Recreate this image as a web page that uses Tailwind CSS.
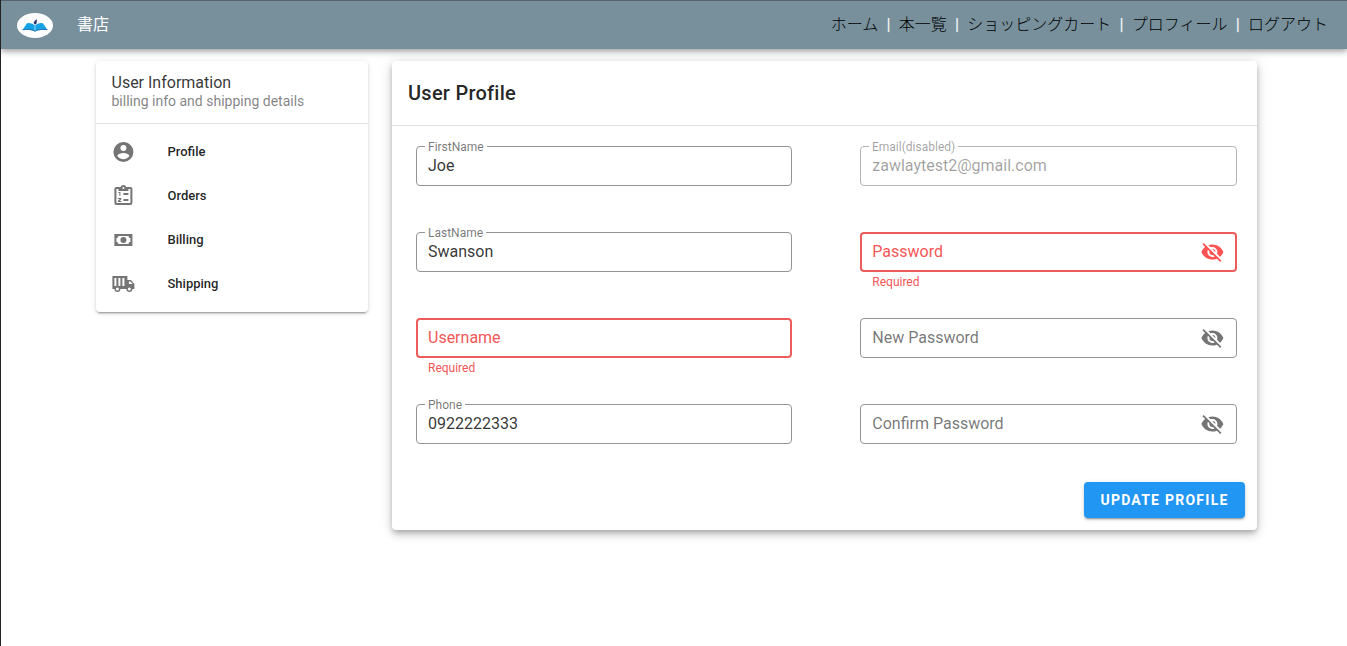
<!DOCTYPE html>
<html lang="ja">
<head>
<meta charset="utf-8">
<title>User Profile</title>
<script src="https://cdn.jsdelivr.net/npm/@tailwindcss/browser@4"></script>
</head>
<body class="bg-white font-['Roboto','Noto_Sans_CJK_JP',sans-serif] text-black/80">
<svg class="hidden">
  <symbol id="eye-off" viewBox="0 0 24 24"><path d="M11.83,9L15,12.16C15,12.11 15,12.05 15,12A3,3 0 0,0 12,9C11.94,9 11.89,9 11.83,9M7.53,9.8L9.08,11.35C9.03,11.56 9,11.77 9,12A3,3 0 0,0 12,15C12.22,15 12.44,14.97 12.65,14.92L14.2,16.45C13.53,16.78 12.79,17 12,17A5,5 0 0,1 7,12C7,11.21 7.2,10.47 7.53,9.8M2,4.27L4.28,6.55L4.73,7C3.08,8.3 1.78,10 1,12C2.73,16.39 7,19.5 12,19.5C13.55,19.5 15.03,19.2 16.38,18.66L16.81,19.08L19.73,22L21,20.73L3.27,3M12,7A5,5 0 0,1 17,12C17,12.64 16.87,13.26 16.64,13.82L19.57,16.75C21.07,15.5 22.27,13.86 23,12C21.27,7.61 17,4.5 12,4.5C10.6,4.5 9.26,4.75 8,5.2L10.17,7.35C10.74,7.13 11.35,7 12,7Z"/></symbol>
</svg>
<div class="h-[646px] overflow-hidden border-l border-[#222]">
  <header class="relative flex h-[49px] items-center border-t border-[#56656d] bg-[#78909c] pl-4 pr-[19px] shadow-[0_2px_4px_-1px_rgba(0,0,0,.2),0_4px_5px_0_rgba(0,0,0,.14),0_1px_10px_0_rgba(0,0,0,.12)]">
    <svg class="h-[25px] w-9" viewBox="0 0 36 25">
      <ellipse cx="18" cy="12.5" rx="18" ry="12.5" fill="#fff"/>
      <path d="M5.500 17 10 10.200Q15 9.300 18 12.500Q21 9.300 26 10.200L30.500 17Q22 16 18 18.500Q14 16 5.500 17Z" fill="#16a3e6"/>
      <path d="M5.500 16.700Q14 15.600 18 18.200Q22 15.600 30.500 16.700" fill="none" stroke="#2467a8" stroke-width=".8"/>
      <path d="M18 12.500V17.500" stroke="#d8f0fb" stroke-width=".7"/>
      <path d="M16.500 10Q17.500 7 20 6.200L19.500 10.500 18 11.800Z" fill="#29366f"/>
    </svg>
    <div class="ml-6 text-base leading-6 text-white">書店</div>
    <nav class="ml-auto flex items-center whitespace-pre text-base font-light leading-6 text-black">
      <a>ホーム</a><span class="w-[20.500px] text-center font-bold text-white/90">|</span><a>本一覧</a><span class="w-[20.500px] text-center font-bold text-white/90">|</span><a>ショッピングカート</a><span class="w-[20.500px] text-center font-bold text-white/90">|</span><a>プロフィール</a><span class="w-[20.500px] text-center font-bold text-white/90">|</span><a>ログアウト</a>
    </nav>
  </header>
  <main class="flex items-start gap-6 pl-[95px] pt-3">
    <aside class="h-[251px] w-[272px] rounded bg-white shadow-[0_3px_1px_-2px_rgba(0,0,0,.2),0_2px_2px_0_rgba(0,0,0,.14),0_1px_5px_0_rgba(0,0,0,.12)]">
      <div class="h-[63px] border-b border-black/12 pl-[15.500px] pt-3">
        <div class="text-base leading-[19px]">User Information</div>
        <div class="text-sm leading-[18px] text-black/50">billing info and shipping details</div>
      </div>
      <ul class="pt-[6px] text-[13px] font-medium text-black/87">
        <li class="flex h-11 items-center gap-[32.500px] pl-[15px]">
          <svg class="size-6 fill-[#757575]" viewBox="-0.4 0 24 24"><path d="M12,19.2C9.5,19.2 7.29,17.92 6,16C6.03,14 10,12.9 12,12.9C14,12.9 17.97,14 18,16C16.71,17.92 14.5,19.2 12,19.2M12,5A3,3 0 0,1 15,8A3,3 0 0,1 12,11A3,3 0 0,1 9,8A3,3 0 0,1 12,5M12,2A10,10 0 0,0 2,12A10,10 0 0,0 12,22A10,10 0 0,0 22,12C22,6.47 17.5,2 12,2Z"/></svg>
          <span>Profile</span>
        </li>
        <li class="flex h-11 items-center gap-[32.500px] pl-[15px]">
          <svg class="size-6 fill-[#757575]" viewBox="-0.4 0 24 24"><path fill-rule="evenodd" d="M19,3H14.82C14.4,1.840 13.300,1 12,1C10.700,1 9.600,1.840 9.180,3H5A2,2 0 0,0 3,5V19A2,2 0 0,0 5,21H19A2,2 0 0,0 21,19V5A2,2 0 0,0 19,3M12,3A1,1 0 0,1 12,5A1,1 0 0,1 12,3M7,7H17V5H19V19H5V5H7V7Z"/><path d="M12 9H17V11H12ZM12 15H17V17H12ZM7 8H9V12H8V9H7ZM6.500 14H10V15.300L8.300 17H10V18H6.500V16.700L8.500 15H6.500Z"/></svg>
          <span>Orders</span>
        </li>
        <li class="flex h-11 items-center gap-[32.500px] pl-[15px]">
          <svg class="size-6 fill-[#757575]" viewBox="-0.4 0 24 24"><path d="M3,6H21V18H3V6M12,9A3,3 0 0,1 15,12A3,3 0 0,1 12,15A3,3 0 0,1 9,12A3,3 0 0,1 12,9M7,8A2,2 0 0,1 5,10V14A2,2 0 0,1 7,16H17A2,2 0 0,1 19,14V10A2,2 0 0,1 17,8H7Z"/></svg>
          <span>Billing</span>
        </li>
        <li class="flex h-11 items-center gap-[32.500px] pl-[15px]">
          <svg class="size-6 fill-[#757575]" viewBox="-0.4 0 24 24"><path fill-rule="evenodd" d="M1 4H16V8H19.500L23 12V17H21A3 3 0 0 1 15 17H9A3 3 0 0 1 3 17H1ZM3 6V14H5V6ZM7 6V14H9V6ZM11 6V14H13V6ZM17.500 9.500V12H21.300L19 9.500ZM6 15.500A1.500 1.500 0 0 0 6 18.500A1.500 1.500 0 0 0 6 15.500ZM18 15.500A1.500 1.500 0 0 0 18 18.500A1.500 1.500 0 0 0 18 15.500Z"/></svg>
          <span>Shipping</span>
        </li>
      </ul>
    </aside>
    <section class="h-[469px] w-[865px] rounded bg-white shadow-[0_3px_5px_-1px_rgba(0,0,0,.2),0_5px_8px_0_rgba(0,0,0,.14),0_1px_14px_0_rgba(0,0,0,.12)]">
      <h1 class="flex h-[65px] items-center border-b border-black/12 pl-4 text-xl font-medium tracking-[0.25px] text-black/87">User Profile</h1>
      <form class="grid grid-cols-[376px_377px] gap-x-[68px] pl-6 pt-5">
        <div class="h-[86px]">
          <div class="relative flex h-10 items-center rounded border border-[#949494] px-[11px]"><label class="absolute left-2 top-[-7px] bg-white px-[3px] text-xs leading-[14px] text-black/55">FirstName</label><span class="pb-px">Joe</span></div>
        </div>
        <div class="h-[86px]">
          <div class="relative flex h-10 items-center rounded border border-[#b5b5b5] px-[11.300px] text-black/38"><label class="absolute left-2 top-[-7px] bg-white px-[3px] text-xs leading-[14px]">Email(disabled)</label><span class="pb-px">zawlaytest2@gmail.com</span></div>
        </div>
        <div class="h-[86px]">
          <div class="relative flex h-10 items-center rounded border border-[#949494] px-[11px]"><label class="absolute left-2 top-[-7px] bg-white px-[3px] text-xs leading-[14px] text-black/55">LastName</label><span class="pb-px">Swanson</span></div>
        </div>
        <div class="h-[86px] text-[#f25757]">
          <div class="flex h-10 items-center justify-between rounded border-2 border-[#ee5c5c] pl-[10.300px] pr-[11px]"><span class="pb-px">Password</span><svg class="size-6 fill-[#ff5252]"><use href="#eye-off" x="0.4"/></svg></div>
          <div class="pl-[12.300px] pt-1 text-xs leading-3">Required</div>
        </div>
        <div class="h-[86px] text-[#f25757]">
          <div class="flex h-10 items-center rounded border-2 border-[#ee5c5c] px-[10px]"><span class="pb-px">Username</span></div>
          <div class="pl-3 pt-1 text-xs leading-3">Required</div>
        </div>
        <div class="h-[86px] text-black/55">
          <div class="flex h-10 items-center justify-between rounded border border-[#949494] pl-[11.300px] pr-3"><span class="pb-px">New Password</span><svg class="size-6 fill-[#757575]"><use href="#eye-off" x="0.4"/></svg></div>
        </div>
        <div class="h-[78px]">
          <div class="relative flex h-10 items-center rounded border border-[#949494] px-[11px]"><label class="absolute left-2 top-[-7px] bg-white px-[3px] text-xs leading-[14px] text-black/55">Phone</label><span class="pb-px">0922222333</span></div>
        </div>
        <div class="h-[78px] text-black/55">
          <div class="flex h-10 items-center justify-between rounded border border-[#949494] pl-[11.300px] pr-3"><span class="pb-px">Confirm Password</span><svg class="size-6 fill-[#757575]"><use href="#eye-off" x="0.4"/></svg></div>
        </div>
      </form>
      <div class="flex justify-end pr-3">
        <button class="h-9 w-[161px] rounded bg-[#2196f3] text-sm font-bold tracking-[1.25px] text-white shadow-[0_3px_1px_-2px_rgba(0,0,0,.2),0_2px_2px_0_rgba(0,0,0,.14),0_1px_5px_0_rgba(0,0,0,.12)]">UPDATE PROFILE</button>
      </div>
    </section>
  </main>
</div>
</body>
</html>
